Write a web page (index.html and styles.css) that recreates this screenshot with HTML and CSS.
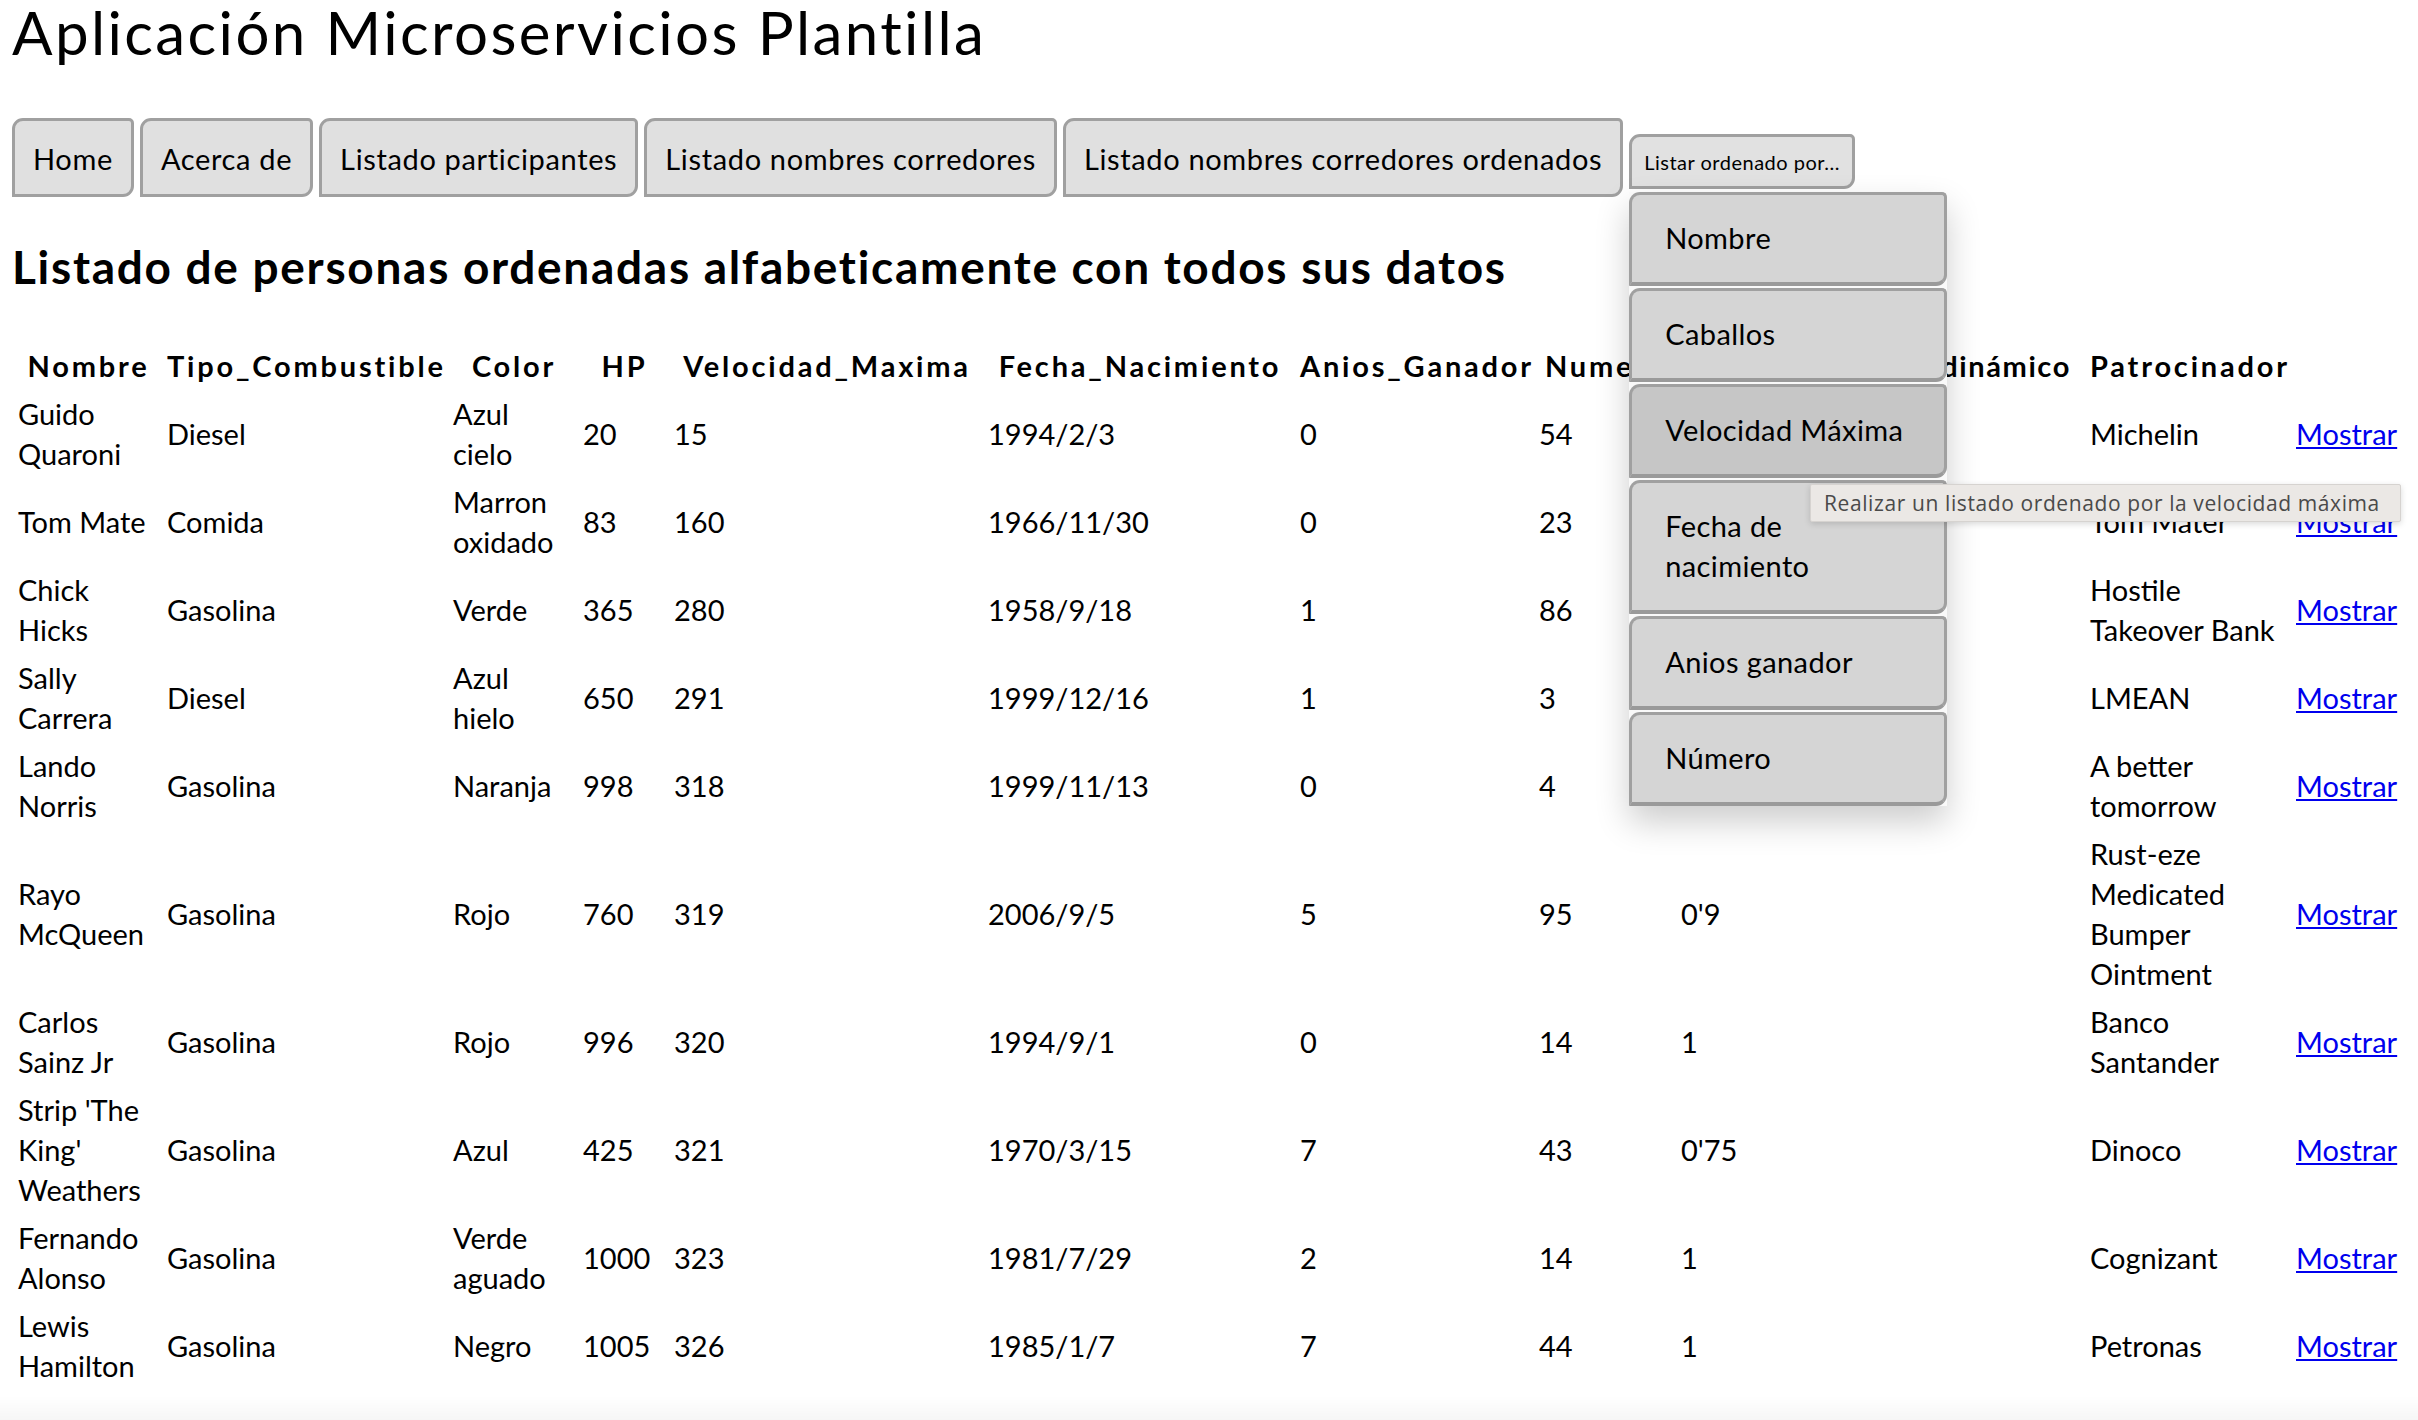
FILE: index.html
```html
<!DOCTYPE html>
<html lang="es">
<head>
<meta charset="utf-8">
<title>Aplicación Microservicios Plantilla</title>
<link rel="stylesheet" href="styles.css">
</head>
<body>
<h1 class="title">Aplicación Microservicios Plantilla</h1>
<nav class="nav">
  <button class="nav-btn">Home</button>
  <button class="nav-btn">Acerca de</button>
  <button class="nav-btn">Listado participantes</button>
  <button class="nav-btn">Listado nombres corredores</button>
  <button class="nav-btn">Listado nombres corredores ordenados</button>
  <div class="dropdown">
    <button class="dropdown-toggle">Listar ordenado por...</button>
    <div class="dropdown-menu">
      <button class="menu-item">Nombre</button>
      <button class="menu-item">Caballos</button>
      <button class="menu-item is-hover">Velocidad Máxima</button>
      <button class="menu-item">Fecha de nacimiento</button>
      <button class="menu-item">Anios ganador</button>
      <button class="menu-item">Número</button>
    </div>
  </div>
</nav>
<h2 class="subtitle">Listado de personas ordenadas alfabeticamente con todos sus datos</h2>
<table class="data">
  <thead>
    <tr>
      <th class="col-nombre">Nombre</th>
      <th class="col-tipo">Tipo_Combustible</th>
      <th class="col-color">Color</th>
      <th class="col-hp">HP</th>
      <th class="col-vel">Velocidad_Maxima</th>
      <th class="col-fecha">Fecha_Nacimiento</th>
      <th class="col-anios">Anios_Ganador</th>
      <th class="col-num">Numero</th>
      <th class="col-coef">Coeficiente_Aerodinámico</th>
      <th class="col-patro">Patrocinador</th>
      <th class="col-link"></th>
    </tr>
  </thead>
  <tbody>
    <tr><td>Guido Quaroni</td><td>Diesel</td><td class="cell-color">Azul cielo</td><td>20</td><td>15</td><td>1994/2/3</td><td>0</td><td>54</td><td>1</td><td>Michelin</td><td><a href="#">Mostrar</a></td></tr>
    <tr><td>Tom Mate</td><td>Comida</td><td class="cell-color">Marron oxidado</td><td>83</td><td>160</td><td>1966/11/30</td><td>0</td><td>23</td><td>1</td><td>Tom Mater</td><td><a href="#">Mostrar</a></td></tr>
    <tr><td>Chick Hicks</td><td>Gasolina</td><td class="cell-color">Verde</td><td>365</td><td>280</td><td>1958/9/18</td><td>1</td><td>86</td><td>1</td><td>Hostile Takeover Bank</td><td><a href="#">Mostrar</a></td></tr>
    <tr><td>Sally Carrera</td><td>Diesel</td><td class="cell-color">Azul hielo</td><td>650</td><td>291</td><td>1999/12/16</td><td>1</td><td>3</td><td>1</td><td>LMEAN</td><td><a href="#">Mostrar</a></td></tr>
    <tr><td>Lando Norris</td><td>Gasolina</td><td class="cell-color">Naranja</td><td>998</td><td>318</td><td>1999/11/13</td><td>0</td><td>4</td><td>1</td><td>A better tomorrow</td><td><a href="#">Mostrar</a></td></tr>
    <tr><td>Rayo McQueen</td><td>Gasolina</td><td class="cell-color">Rojo</td><td>760</td><td>319</td><td>2006/9/5</td><td>5</td><td>95</td><td>0'9</td><td>Rust-eze Medicated Bumper Ointment</td><td><a href="#">Mostrar</a></td></tr>
    <tr><td>Carlos Sainz Jr</td><td>Gasolina</td><td class="cell-color">Rojo</td><td>996</td><td>320</td><td>1994/9/1</td><td>0</td><td>14</td><td>1</td><td>Banco Santander</td><td><a href="#">Mostrar</a></td></tr>
    <tr><td>Strip 'The King' Weathers</td><td>Gasolina</td><td class="cell-color">Azul</td><td>425</td><td>321</td><td>1970/3/15</td><td>7</td><td>43</td><td>0'75</td><td>Dinoco</td><td><a href="#">Mostrar</a></td></tr>
    <tr><td>Fernando Alonso</td><td>Gasolina</td><td class="cell-color">Verde aguado</td><td>1000</td><td>323</td><td>1981/7/29</td><td>2</td><td>14</td><td>1</td><td>Cognizant</td><td><a href="#">Mostrar</a></td></tr>
    <tr><td>Lewis Hamilton</td><td>Gasolina</td><td class="cell-color">Negro</td><td>1005</td><td>326</td><td>1985/1/7</td><td>7</td><td>44</td><td>1</td><td>Petronas</td><td><a href="#">Mostrar</a></td></tr>
  </tbody>
</table>
<div class="tooltip">Realizar un listado ordenado por la velocidad máxima</div>
<div class="window-edge"></div>
</body>
</html>
```
FILE: styles.css
```css
html { background: #fff; }
body {
  margin: 0;
  padding: 0 12px;
  font-family: Lato, "Noto Sans", sans-serif;
  font-size: 29px;
  line-height: 40px;
  color: #000;
  background: #fff;
}
.title {
  font-size: 60px;
  font-weight: 400;
  letter-spacing: 2.4px;
  line-height: 64px;
  margin: 0 0 54px;
}
.nav {
  display: flex;
  align-items: baseline;
  gap: 6px;
}
.nav-btn {
  font-family: inherit;
  font-size: 29px;
  letter-spacing: 0.65px;
  line-height: 40px;
  padding: 18px 18px 15px;
  margin: 0;
  color: #000;
  background: #e0e0e0;
  border: 3px solid #a0a0a0;
  border-radius: 11px 5px 11px 0;
}
.dropdown {
  position: relative;
}
.dropdown-toggle {
  font-family: inherit;
  font-size: 20px;
  letter-spacing: 0.5px;
  line-height: 26px;
  padding: 12px 12px 11px;
  margin: 0;
  color: #000;
  background: #e1e1e1;
  border: 3px solid #a0a0a0;
  border-radius: 11px 5px 11px 0;
}
.dropdown-menu {
  position: absolute;
  top: calc(100% + 3px);
  left: 0;
  z-index: 2;
  width: 318px;
  display: flex;
  flex-direction: column;
  gap: 2px;
  background: #f9f9f9;
  box-shadow: 0 16px 32px rgba(0, 0, 0, 0.2);
}
.menu-item {
  display: block;
  width: 100%;
  font-family: inherit;
  font-size: 29px;
  letter-spacing: 0.4px;
  line-height: 40px;
  text-align: left;
  padding: 23px 24px 24px 33px;
  margin: 0;
  color: #000;
  background: #d5d5d5;
  border: 3px solid #a0a0a0;
  border-bottom: 4px solid #9a9a9a;
  border-radius: 11px 5px 11px 0;
}
.menu-item.is-hover {
  background: #c6c6c6;
}
.subtitle {
  font-size: 46px;
  font-weight: 700;
  letter-spacing: 1.7px;
  line-height: 52px;
  margin: 44px 0 47px;
}
.data {
  width: 100%;
  table-layout: fixed;
  border-spacing: 4px;
  margin: 0;
}
.data th,
.data td {
  padding: 2px;
  line-height: 40px;
  box-sizing: border-box;
}
.data th {
  font-weight: 700;
  letter-spacing: 2.8px;
  text-align: center;
  white-space: nowrap;
}
.data td {
  text-align: left;
  vertical-align: middle;
}
.data td.cell-color { padding-right: 14px; }
.data a { color: #0000ee; text-decoration: underline; }
.col-nombre { width: 145px; }
.col-tipo { width: 282px; }
.col-color { width: 126px; }
.col-hp { width: 87px; }
.col-vel { width: 310px; }
.col-fecha { width: 308px; }
.col-anios { width: 235px; }
.col-num { width: 138px; }
.data th.col-coef { width: 405px; letter-spacing: 1.6px; }
.col-patro { width: 202px; }
.col-link { width: 108px; }
.tooltip {
  position: absolute;
  left: 1810px;
  top: 484px;
  z-index: 3;
  height: 38px;
  box-sizing: border-box;
  padding: 0 20px 0 13px;
  font-family: "Open Sans", Lato, sans-serif;
  font-size: 21px;
  letter-spacing: 0.6px;
  line-height: 36px;
  color: #4a4a4a;
  background: #ebe8e5;
  border: 1px solid #d6d3d0;
  border-radius: 2px;
  box-shadow: 0 2px 6px rgba(0, 0, 0, 0.15);
  white-space: nowrap;
}
.window-edge {
  position: fixed;
  left: 0;
  right: 0;
  bottom: 0;
  height: 24px;
  background: linear-gradient(to bottom, rgba(0, 0, 0, 0), rgba(0, 0, 0, 0.035));
  pointer-events: none;
}
```
